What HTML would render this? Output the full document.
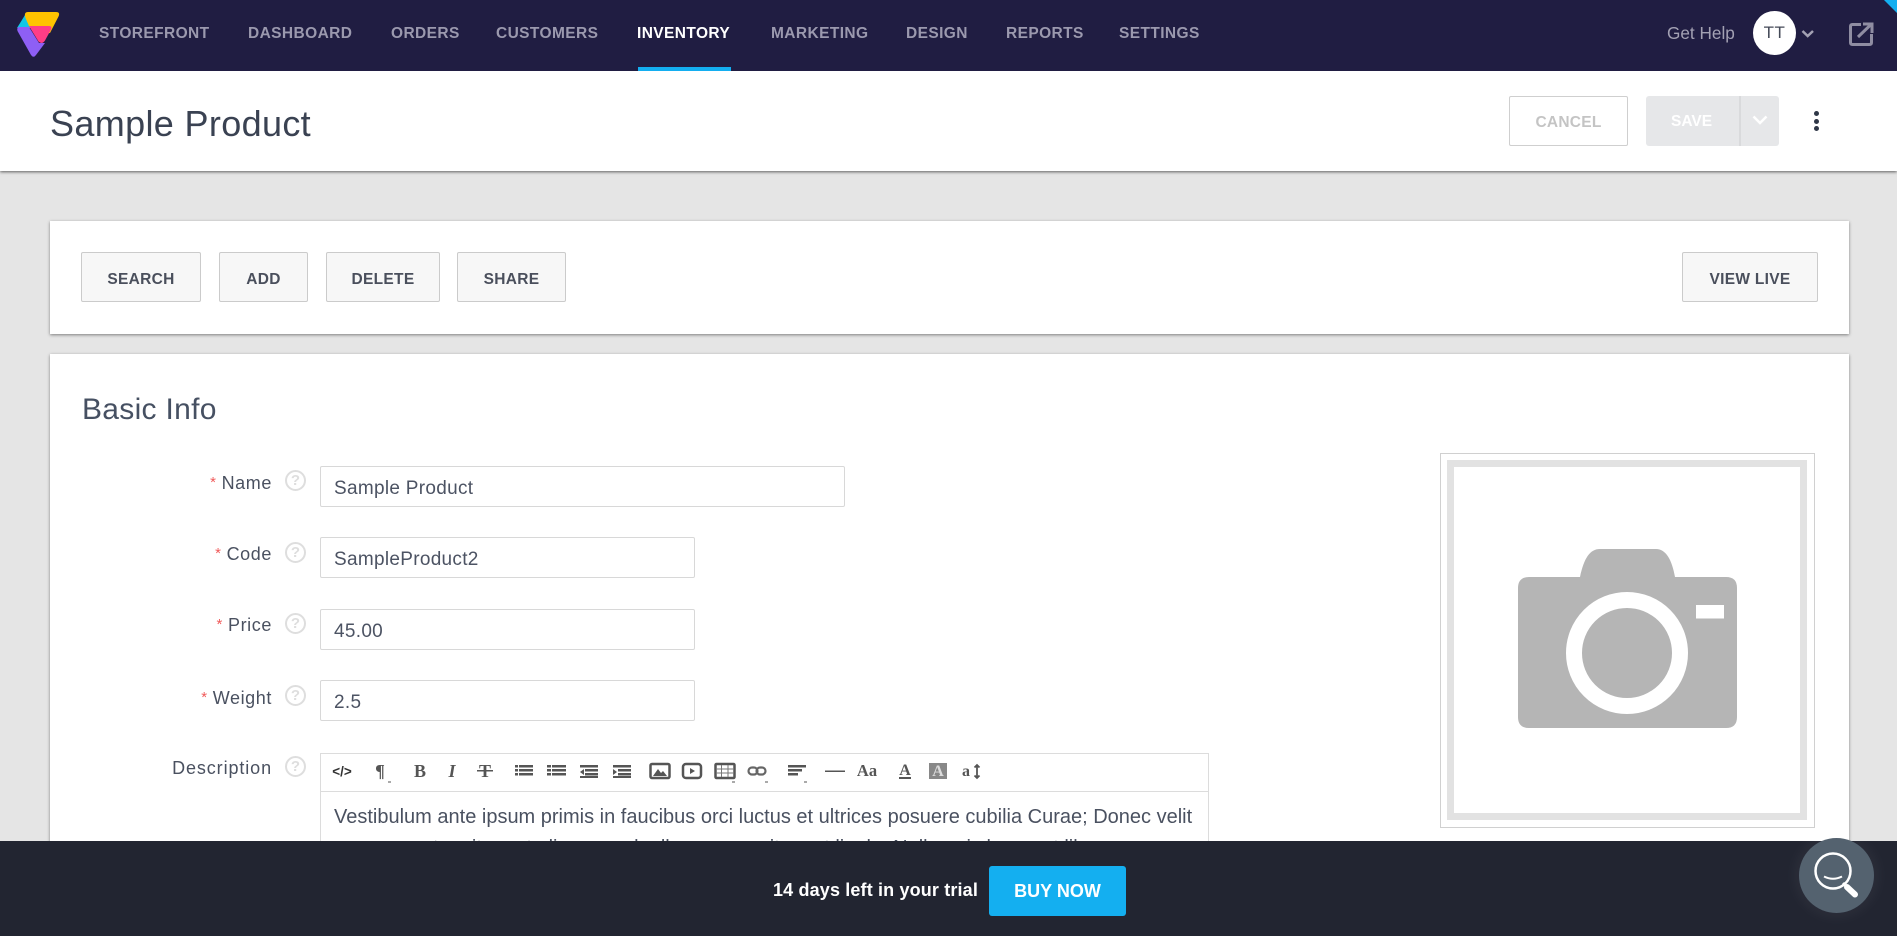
<!DOCTYPE html>
<html lang="en">
<head>
<meta charset="utf-8">
<title>Sample Product</title>
<style>
html,body{margin:0;padding:0;width:1897px;height:936px;overflow:hidden;background:#e5e5e5;}
body{position:relative;font-family:"Liberation Sans",sans-serif;color:#4a5160;}
.a{position:absolute;white-space:nowrap;}
nav{position:absolute;left:0;top:0;width:1897px;height:71px;background:#201d42;z-index:5;}
nav .i{position:absolute;top:24px;line-height:20px;font-size:15.500px;font-weight:700;letter-spacing:.4px;color:#9b99ae;white-space:nowrap;}
header{position:absolute;left:0;top:71px;width:1897px;height:100px;background:#fff;box-shadow:0 1px 3px rgba(0,0,0,.6);z-index:4;}
.card{position:absolute;left:50px;width:1799px;background:#fff;box-shadow:0 1px 3px rgba(0,0,0,.45);}
.btn{position:absolute;top:252px;height:48px;line-height:53px;background:#f7f7f7;border:1px solid #cbcbcb;border-radius:2px;text-align:center;font-size:15.500px;font-weight:700;letter-spacing:.3px;color:#4a4f5c;box-sizing:content-box;}
.lbl{position:absolute;right:1625px;line-height:22px;font-size:18px;letter-spacing:.6px;color:#4a5160;white-space:nowrap;}
.lbl b{font-weight:400;color:#f05a5a;font-size:15px;margin-right:5px;position:relative;top:-2px;}
.help{position:absolute;left:285px;width:17px;height:17px;border:2px solid #dedede;border-radius:50%;text-align:center;line-height:17px;font-size:15px;font-weight:700;color:#dedede;}
.inp{position:absolute;left:320px;height:39px;line-height:44px;border:1px solid #d8d8d8;border-radius:2px;background:#fff;padding-left:13px;font-size:19px;letter-spacing:.3px;color:#4c5363;box-sizing:content-box;}
#bar{position:absolute;left:0;top:841px;width:1897px;height:95px;background:#222531;z-index:6;}
</style>
</head>
<body>

<nav>
  <svg class="a" style="left:0;top:0" width="80" height="71" viewBox="0 0 80 71">
    <path d="M25 15 L17 28 L31 28 Z" fill="#12c7e6"/>
    <path d="M28 12 H56 Q60.500 12 58.500 16.500 L50 33 L40 34 L29 26 L25.500 18 Q23.500 12 28 12 Z" fill="#ffc300"/>
    <path d="M19.500 27 H29 L39 43 H45 L36 55 Q33.500 58.500 31 55 L17.500 31 Q16.500 27 19.500 27 Z" fill="#8e5ff5"/>
    <path d="M29 26 H49 Q52.500 26 51 29.500 L45 40.500 Q42 45 38.500 41.500 Z" fill="#ff3d86"/>
  </svg>
  <span class="i" style="left:99px">STOREFRONT</span>
  <span class="i" style="left:248px">DASHBOARD</span>
  <span class="i" style="left:391px">ORDERS</span>
  <span class="i" style="left:496px">CUSTOMERS</span>
  <span class="i" style="left:637px;color:#fff">INVENTORY</span>
  <span class="i" style="left:771px">MARKETING</span>
  <span class="i" style="left:906px">DESIGN</span>
  <span class="i" style="left:1006px">REPORTS</span>
  <span class="i" style="left:1119px">SETTINGS</span>
  <div class="a" style="left:638px;top:67px;width:93px;height:4px;background:#14aef0"></div>
  <span class="a" style="left:1667px;top:23px;line-height:20px;font-size:17.200px;color:#a3a1b3">Get Help</span>
  <div class="a" style="left:1753px;top:11px;width:43px;height:44px;border-radius:50%;background:#fff;text-align:center;line-height:44px;font-size:17px;color:#444a58;letter-spacing:.5px">TT</div>
  <svg class="a" style="left:1800px;top:26px" width="18" height="16" viewBox="0 0 18 16"><path d="M2.500 5 L7.700 10 L13 5" fill="none" stroke="#a3a1b3" stroke-width="2.500"/></svg>
  <svg class="a" style="left:1846px;top:20px" width="32" height="28" viewBox="0 0 32 28">
    <path d="M15 4.500 H6.500 Q4.500 4.500 4.500 6.500 V22.500 Q4.500 24.500 6.500 24.500 H23.500 Q25.500 24.500 25.500 22.500 V14" fill="none" stroke="#8f8da2" stroke-width="3"/>
    <path d="M12 17 L25.500 4 M17 4 H26 V13" fill="none" stroke="#8f8da2" stroke-width="3"/>
  </svg>
  <svg class="a" style="left:1877px;top:0" width="20" height="20" viewBox="0 0 20 20"><path d="M7 0 H20 V13 Z" fill="#14aff0"/></svg>
</nav>

<header>
  <span class="a" style="left:50px;top:31px;line-height:44px;font-size:36px;letter-spacing:.35px;color:#3a4252">Sample Product</span>
  <div class="a" style="left:1509px;top:25px;width:117px;height:48px;border:1px solid #cfcfcf;border-radius:2px;text-align:center;line-height:51px;font-size:15.500px;font-weight:700;letter-spacing:.25px;color:#c4c4c4">CANCEL</div>
  <div class="a" style="left:1646px;top:25px;width:133px;height:50px;background:#e6e7e9;border-radius:3px"></div>
  <div class="a" style="left:1739px;top:25px;width:2px;height:50px;background:#d9dadc"></div>
  <span class="a" style="left:1671px;top:41px;line-height:20px;font-size:15.500px;font-weight:700;color:#fff">SAVE</span>
  <svg class="a" style="left:1751px;top:42px" width="18" height="16" viewBox="0 0 18 16"><path d="M2.500 3.500 L9 10 L15.500 3.500" fill="none" stroke="#fff" stroke-width="2.500"/></svg>
  <div class="a" style="left:1814px;top:40px;width:5px;height:5px;border-radius:50%;background:#2f3747"></div>
  <div class="a" style="left:1814px;top:48px;width:5px;height:5px;border-radius:50%;background:#2f3747"></div>
  <div class="a" style="left:1814px;top:55px;width:5px;height:5px;border-radius:50%;background:#2f3747"></div>
</header>

<div class="card" style="top:221px;height:113px"></div>
<div class="btn" style="left:81px;width:118px">SEARCH</div>
<div class="btn" style="left:219px;width:87px">ADD</div>
<div class="btn" style="left:326px;width:112px">DELETE</div>
<div class="btn" style="left:457px;width:107px">SHARE</div>
<div class="btn" style="left:1682px;width:134px">VIEW LIVE</div>

<div class="card" style="top:354px;height:560px"></div>
<span class="a" style="left:82px;top:390px;line-height:40px;font-size:30px;letter-spacing:.3px;color:#465062">Basic Info</span>

<div class="lbl" style="top:472px"><b>*</b>Name</div>
<div class="help" style="top:470px">?</div>
<div class="inp" style="top:466px;width:510px">Sample Product</div>

<div class="lbl" style="top:543px"><b>*</b>Code</div>
<div class="help" style="top:542px">?</div>
<div class="inp" style="top:537px;width:360px">SampleProduct2</div>

<div class="lbl" style="top:614px"><b>*</b>Price</div>
<div class="help" style="top:613px">?</div>
<div class="inp" style="top:609px;width:360px">45.00</div>

<div class="lbl" style="top:687px"><b>*</b>Weight</div>
<div class="help" style="top:685px">?</div>
<div class="inp" style="top:680px;width:360px">2.5</div>

<div class="lbl" style="top:757px;letter-spacing:.9px">Description</div>
<div class="help" style="top:756px">?</div>

<div class="a" style="left:320px;top:753px;width:887px;height:150px;border:1px solid #dcdcdc;background:#fff;box-sizing:content-box"></div>
<div class="a" style="left:321px;top:791px;width:887px;height:1px;background:#dcdcdc"></div>
<div class="a" style="left:334px;top:802px;font-size:20px;line-height:31px;color:#4a5160">Vestibulum ante ipsum primis in faucibus orci luctus et ultrices posuere cubilia Curae; Donec velit<br>neque, auctor sit amet aliquam vel, ullamcorper sit amet ligula. Nulla quis lorem ut libero</div>

<svg class="a" style="left:320px;top:753px" width="890" height="38" viewBox="320 753 890 38" font-family="'Liberation Serif',serif" fill="#555">
  <text x="342" y="776" text-anchor="middle" font-family="'Liberation Sans',sans-serif" font-size="13.500" font-weight="700" fill="#333">&lt;/&gt;</text>
  <text x="380" y="777" text-anchor="middle" font-size="18" font-weight="700">¶</text>
  <rect x="388" y="781" width="3" height="2" fill="#aaa"/>
  <text x="420" y="777" text-anchor="middle" font-size="18" font-weight="700">B</text>
  <text x="452" y="777" text-anchor="middle" font-size="18" font-weight="700" font-style="italic">I</text>
  <text x="485" y="777" text-anchor="middle" font-size="18" font-weight="700">T</text>
  <rect x="477" y="770" width="16" height="1.500"/>
  <!-- lists -->
  <g>
    <rect x="515" y="765" width="3" height="2.500"/><rect x="515" y="769" width="3" height="2.500"/><rect x="515" y="773" width="3" height="2.500"/>
    <rect x="519" y="765" width="14" height="2.500"/><rect x="519" y="769" width="14" height="2.500"/><rect x="519" y="773" width="14" height="2.500"/>
    <rect x="547" y="765" width="4" height="2.500"/><rect x="547" y="769" width="4" height="2.500"/><rect x="547" y="773" width="4" height="2.500"/>
    <rect x="552" y="765" width="14" height="2.500"/><rect x="552" y="769" width="14" height="2.500"/><rect x="552" y="773" width="14" height="2.500"/>
    <rect x="580" y="765" width="18" height="2.500"/><rect x="585" y="769" width="13" height="2.500"/><rect x="585" y="773" width="13" height="2.500"/><rect x="580" y="776" width="18" height="2"/>
    <path d="M584 769 V775 L580 772 Z"/>
    <rect x="613" y="765" width="18" height="2.500"/><rect x="618" y="769" width="13" height="2.500"/><rect x="618" y="773" width="13" height="2.500"/><rect x="613" y="776" width="18" height="2"/>
    <path d="M613 769 V775 L617 772 Z"/>
  </g>
  <!-- image -->
  <rect x="650.500" y="764" width="19" height="14" rx="1.500" fill="none" stroke="#555" stroke-width="2.500"/>
  <path d="M653 776 L658 769 L661 773 L663 771 L667 776 Z"/>
  <!-- video -->
  <rect x="683" y="764" width="18" height="14" rx="3" fill="none" stroke="#555" stroke-width="2.500"/>
  <path d="M690 768 V774 L695 771 Z"/>
  <!-- table -->
  <rect x="715.500" y="764" width="19" height="14" rx="1" fill="none" stroke="#555" stroke-width="2.500"/>
  <path d="M716 769 H734 M716 773 H734 M721.500 765 V777 M728 765 V777" stroke="#777" stroke-width="1" fill="none"/>
  <rect x="732" y="781" width="3" height="2" fill="#aaa"/>
  <!-- link -->
  <rect x="748.500" y="767.500" width="9" height="7" rx="3.500" fill="none" stroke="#666" stroke-width="2.200"/>
  <rect x="756.500" y="767.500" width="9" height="7" rx="3.500" fill="none" stroke="#666" stroke-width="2.200"/>
  <rect x="765" y="781" width="3" height="2" fill="#aaa"/>
  <!-- align -->
  <rect x="788" y="765" width="18" height="2.500"/><rect x="788" y="769" width="14" height="2.500"/><rect x="788" y="773" width="10" height="2.500"/>
  <rect x="804" y="781" width="3" height="2" fill="#aaa"/>
  <!-- hr -->
  <rect x="825" y="770.500" width="20" height="1.500"/>
  <text x="867" y="776" text-anchor="middle" font-size="16.500" font-weight="700">Aa</text>
  <text x="905" y="775" text-anchor="middle" font-size="16" font-weight="700">A</text>
  <rect x="899" y="777" width="12" height="2"/>
  <rect x="929" y="763" width="18" height="16" fill="#888"/>
  <text x="938" y="776" text-anchor="middle" font-size="16" font-weight="700" fill="#ddd">A</text>
  <text x="966" y="776" text-anchor="middle" font-size="16" font-weight="700">a</text>
  <path d="M977 765 V778 M974.500 767.500 L977 765 L979.500 767.500 M974.500 775.500 L977 778 L979.500 775.500" fill="none" stroke="#555" stroke-width="1.800"/>
</svg>

<div class="a" style="left:1440px;top:453px;width:373px;height:373px;border:1px solid #d0d0d0;background:#fff"></div>
<div class="a" style="left:1447px;top:460px;width:346px;height:346px;border:7px solid #e2e2e2"></div>
<svg class="a" style="left:1510px;top:540px" width="240" height="200" viewBox="1510 540 240 200">
  <path d="M1580 577 C1584 558 1590 549 1600 549 H1656 C1666 549 1672 560 1675 577 H1726 Q1737 577 1737 588 V717 Q1737 728 1726 728 H1529 Q1518 728 1518 717 V588 Q1518 577 1529 577 Z" fill="#b5b5b5"/>
  <circle cx="1627" cy="653" r="53" fill="none" stroke="#fff" stroke-width="16"/>
  <rect x="1696" y="605" width="28" height="13.500" fill="#fff"/>
</svg>

<div id="bar">
  <span class="a" style="left:773px;top:39px;line-height:20px;font-size:18px;font-weight:700;letter-spacing:.15px;color:#fff">14 days left in your trial</span>
  <div class="a" style="left:989px;top:25px;width:137px;height:50px;line-height:51px;background:#14aff0;border-radius:3px;text-align:center;font-size:18px;font-weight:700;color:#fff">BUY NOW</div>
</div>

<div class="a" style="left:1799px;top:838px;width:75px;height:75px;border-radius:50%;background:#54626f;box-shadow:0 0 18px rgba(255,255,255,.08);z-index:7"></div>
<svg class="a" style="left:1799px;top:838px;z-index:8" width="75" height="75" viewBox="1799 838 75 75">
  <circle cx="1833" cy="871" r="17.500" fill="none" stroke="#fff" stroke-width="2.500"/>
  <path d="M1824 876.500 Q1833 881 1842 876.500" fill="none" stroke="#fff" stroke-width="2"/>
  <path d="M1843 883 L1847 887" fill="none" stroke="#fff" stroke-width="3"/>
  <path d="M1847 887 L1855 894.500" fill="none" stroke="#fff" stroke-width="6" stroke-linecap="round"/>
</svg>

</body>
</html>
